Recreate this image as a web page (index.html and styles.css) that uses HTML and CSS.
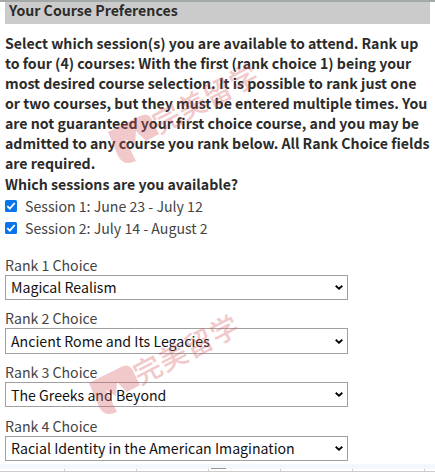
FILE: index.html
```html
<!DOCTYPE html>
<html lang="en">
<head>
<meta charset="utf-8">
<title>Your Course Preferences</title>
<link rel="stylesheet" href="styles.css">
</head>
<body>
<main class="page">
  <h2 class="section-title">Your Course Preferences</h2>
  <p class="intro">Select which session(s) you are available to attend. Rank up<br>to four (4) courses: With the first (rank choice 1) being your<br>most desired course selection. It is possible to rank just one<br>or two courses, but they must be entered multiple times. You<br>are not guaranteed your first choice course, and you may be<br>admitted to any course you rank below. All Rank Choice fields<br>are required.<br>Which sessions are you available?</p>
  <div class="sessions">
    <label class="session"><svg class="check" viewBox="0 0 12 12"><rect width="12" height="12" rx="1.5"/><path d="M2.3 6.2 4.8 8.6 9.7 3"/></svg><span>Session 1: June 23 - July 12</span></label>
    <label class="session"><svg class="check" viewBox="0 0 12 12"><rect width="12" height="12" rx="1.5"/><path d="M2.3 6.2 4.8 8.6 9.7 3"/></svg><span>Session 2: July 14 - August 2</span></label>
  </div>
  <div class="ranks">
    <div class="rank"><div class="rank-label">Rank 1 Choice</div><div class="select"><span>Magical Realism</span><svg class="chevron" viewBox="0 0 8 5"><path d="M.7.8 4 3.7 7.3.8"/></svg></div></div>
    <div class="rank"><div class="rank-label">Rank 2 Choice</div><div class="select"><span>Ancient Rome and Its Legacies</span><svg class="chevron" viewBox="0 0 8 5"><path d="M.7.8 4 3.7 7.3.8"/></svg></div></div>
    <div class="rank"><div class="rank-label">Rank 3 Choice</div><div class="select"><span>The Greeks and Beyond</span><svg class="chevron" viewBox="0 0 8 5"><path d="M.7.8 4 3.7 7.3.8"/></svg></div></div>
    <div class="rank"><div class="rank-label">Rank 4 Choice</div><div class="select"><span>Racial Identity in the American Imagination</span><svg class="chevron" viewBox="0 0 8 5"><path d="M.7.8 4 3.7 7.3.8"/></svg></div></div>
  </div>
  <div class="sheet-edge"><i class="handle"></i></div>
  <svg class="watermark watermark-top" viewBox="0 0 160 110"><path d="M0 25 32 9Q39 5 43 11L51 27 38 34 28 24 27 38 17 32 28 54Q16 60 10 49Z"/><text transform="translate(51 27.5) rotate(-27.5)">完美留学</text></svg>
  <svg class="watermark watermark-bottom" viewBox="0 0 160 110"><path d="M0 25 32 9Q39 5 43 11L51 27 38 34 28 24 27 38 17 32 28 54Q16 60 10 49Z"/><text transform="translate(51 27.5) rotate(-27.5)">完美留学</text></svg>
</main>
</body>
</html>
```

FILE: styles.css
```css
* { box-sizing: border-box; }
body { margin: 0; background: #fff; }
.page {
  position: relative;
  width: 435px;
  height: 473px;
  overflow: hidden;
  padding-left: 5px;
  font: 14.15px/20.15px "Noto Sans CJK SC", sans-serif;
  color: #2b2b2b;
  border-top: 2px solid #a3aaa7;
}
.section-title {
  width: 425px;
  height: 22px;
  margin: 0;
  padding-left: 4px;
  background: #cbcbcb;
  font-size: 14.15px;
  line-height: 17px;
}
.intro { margin: 8.5px 0 0; font-weight: 700; white-space: nowrap; }
.sessions { padding-top: 1px; }
.session { display: flex; align-items: center; height: 22px; gap: 8px; color: #444; }
.check { width: 12px; height: 12px; fill: #0875ed; }
.check path { fill: none; stroke: #fff; stroke-width: 1.8; }
.ranks { margin-top: 16px; }
.rank { height: 53.6px; }
.rank-label { height: 20px; line-height: 20px; color: #444; }
.select {
  display: flex;
  align-items: center;
  justify-content: space-between;
  width: 343px;
  height: 25.5px;
  padding: 0 4px 0 5px;
  border: 1px solid #a0a0a0;
  color: #111;
}
.chevron { width: 8px; height: 5px; fill: none; stroke: #000; stroke-width: 1.8; }
.sheet-edge {
  position: absolute;
  left: 0;
  top: 462px;
  width: 435px;
  height: 9px;
  background:
    linear-gradient(#ccc, #ccc) 0 7px / 435px 1px no-repeat,
    repeating-linear-gradient(90deg, transparent 0 64px, #ccc 64px 65px, transparent 65px 72px) 0 5px / 72px 3px repeat-x,
    linear-gradient(#f4f8fc, #f4f8fc) 0 0 / 435px 5px no-repeat;
}
.handle { position: absolute; left: 211px; top: 4px; width: 15px; height: 1px; background: #999; }
.watermark { position: absolute; width: 160px; height: 110px; overflow: visible; fill: #d85b60; opacity: .32; pointer-events: none; }
.watermark text { font: 500 28px "Noto Sans CJK SC", sans-serif; letter-spacing: .8px; }
.watermark-top { left: 108px; top: 105px; }
.watermark-bottom { left: 89px; top: 356px; }
```
